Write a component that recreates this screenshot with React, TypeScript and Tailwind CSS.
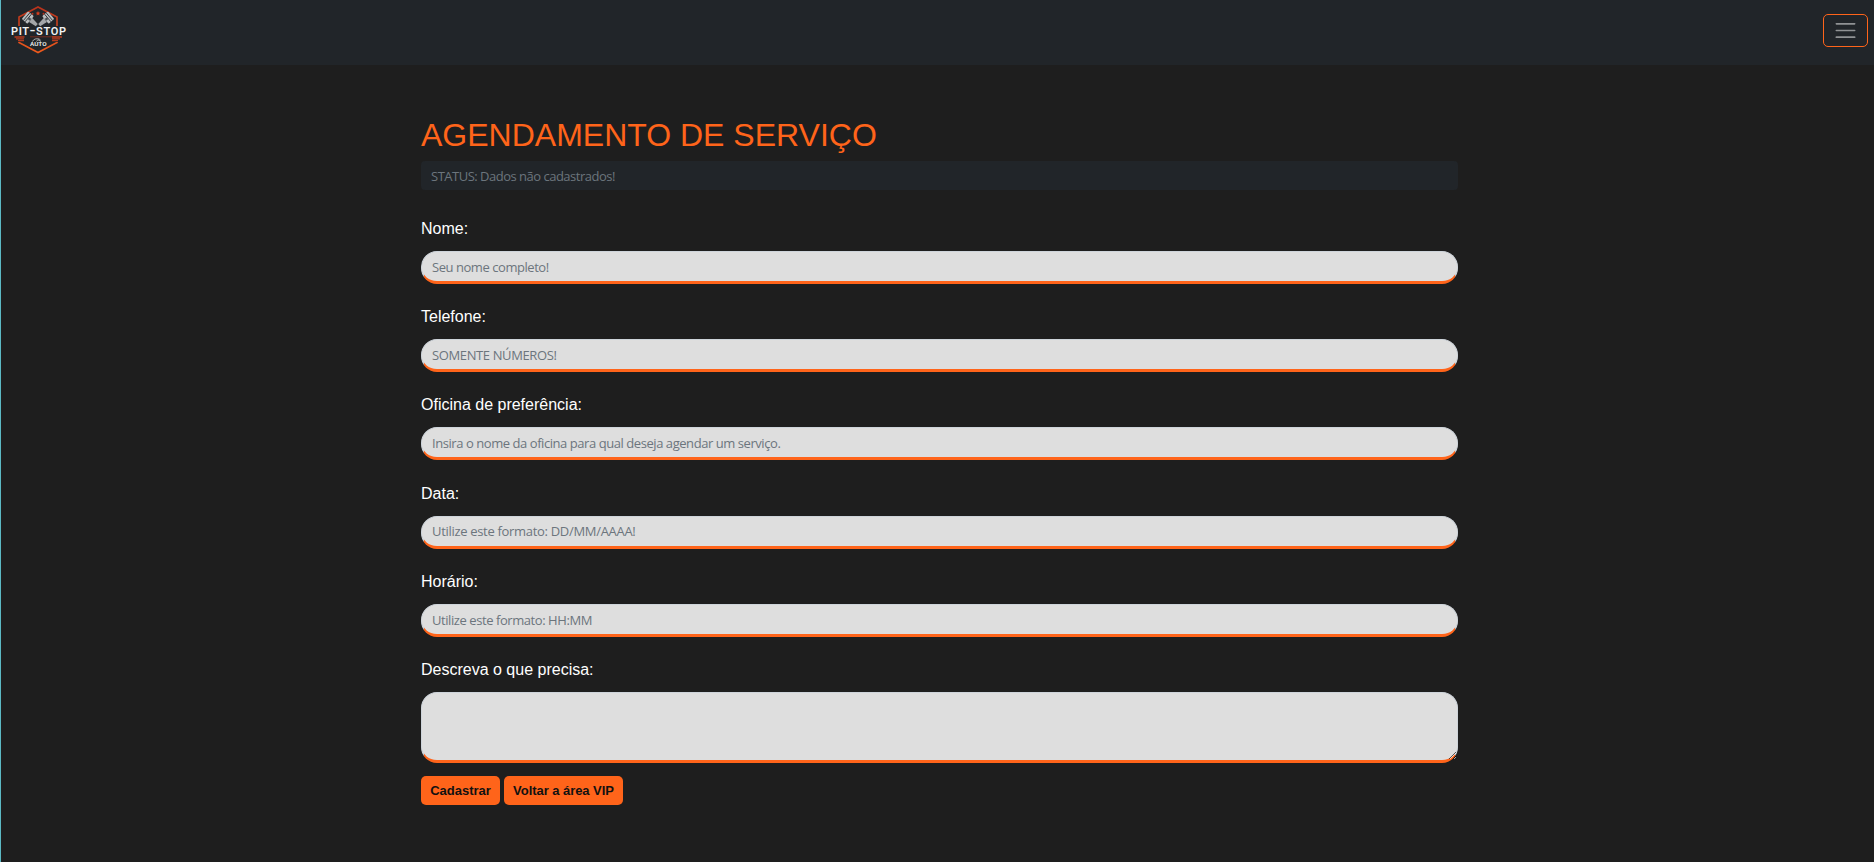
import React from "react";

const fields = [
  { label: "Nome:", placeholder: "Seu nome completo!", spacing: "tracking-[-0.45px]" },
  { label: "Telefone:", placeholder: "SOMENTE NÚMEROS!", spacing: "tracking-[-0.38px]" },
  {
    label: "Oficina de preferência:",
    placeholder: "Insira o nome da oficina para qual deseja agendar um serviço.",
    spacing: "tracking-[-0.44px]",
  },
  { label: "Data:", placeholder: "Utilize este formato: DD/MM/AAAA!", spacing: "tracking-[-0.31px]" },
  { label: "Horário:", placeholder: "Utilize este formato: HH:MM", spacing: "tracking-[-0.43px] pt-px" },
];

function Piston() {
  return (
    <g>
      <rect x="-5" y="-6" width="10" height="7.5" rx="1" fill="#b9bcbd" />
      <path d="M-5 -3.7h10M-5 -1.6h10" stroke="#33373b" strokeWidth="0.9" />
      <path d="M-2.5 1.5h5l-1 8h-3z" fill="#a4a7a9" />
      <circle cx="0" cy="0" r="1.4" fill="#4b5054" />
    </g>
  );
}

function Logo() {
  return (
    <svg width="60" height="52" viewBox="0 0 60 52" aria-label="Pit-Stop Auto">
      <defs>
        <linearGradient id="frame" x1="0" y1="0" x2="0" y2="1">
          <stop offset="0" stopColor="#b8321c" />
          <stop offset="1" stopColor="#ee5a1c" />
        </linearGradient>
      </defs>
      <path d="M10 20V11L29 1l19 10v9M10 36v.5L29 46.500l19-10v-.5" fill="none" stroke="url(#frame)" strokeWidth="1.6" />
      <path d="M29 5l.7 1.500 1.600.2-1.200 1.100.3 1.600L29 8.600l-1.400.8.3-1.600-1.200-1.100 1.600-.2z" fill="#d63c1c" />
      <circle cx="23.500" cy="7.800" r="1" fill="#b8321c" />
      <circle cx="34.500" cy="7.800" r="1" fill="#b8321c" />
      <g transform="translate(20.500 13) rotate(-50)"><Piston /></g>
      <g transform="translate(37.500 13) rotate(50)"><Piston /></g>
      <path d="M21 30.800h26" stroke="#8c2e1e" strokeWidth="0.8" />
      <path d="M5.500 31h10M7 32.800h8M9 34.600h6M43 31h10M43 32.800h8M43 34.600h6" stroke="#b63b1e" strokeWidth="1.3" />
      <g fill="#f1f2f2" fontFamily="Roboto, sans-serif" fontWeight="600">
        <text x="2" y="29" fontSize="11" textLength="18" lengthAdjust="spacing">PIT</text>
        <text x="20.500" y="28.500" fontSize="12" textLength="6" lengthAdjust="spacingAndGlyphs">-</text>
        <text x="27" y="29" fontSize="11" textLength="30" lengthAdjust="spacing">STOP</text>
        <text x="21" y="40.300" fontSize="6" textLength="16.500" lengthAdjust="spacingAndGlyphs">AUTO</text>
      </g>
      <path d="M23.500 35.500c1-2.500 3.500-3.200 7-2.500M27.500 35.500c.5-1.500 2-2 4-1.500M29.500 34l2.500 1.500" fill="none" stroke="#b4b7b8" strokeWidth="0.9" />
    </svg>
  );
}

const controlStyle =
  "block w-full border border-b-[3px] border-[#ced4da] border-b-[#ff641a] bg-[#dedede] rounded-2xl outline-none";

export default function App() {
  return (
    <div className="h-[862px] overflow-hidden border-l border-[#5cb9c4] bg-[#1e1e1e] font-['Liberation_Sans',Arial,sans-serif] text-white">
      <header className="flex h-[65px] items-center justify-between bg-[#212529] pr-1.5 pl-2">
        <a href="#" className="mt-[-2px] block">
          <Logo />
        </a>
        <button
          aria-label="Menu"
          className="mt-[-4px] flex h-[33px] w-[45px] items-center justify-center rounded-[5px] border border-[#ff641a]"
        >
          <svg width="25" height="25" viewBox="0 0 30 30" fill="none" stroke="#909294" strokeWidth="2" strokeLinecap="round">
            <path d="M4 7h22M4 15h22M4 23h22" />
          </svg>
        </button>
      </header>
      <main className="ml-[420px] w-[1037px] pt-[51px]">
        <h1 className="h-[45px] text-[32px] leading-[38px] whitespace-nowrap text-[#ff641a]">
          AGENDAMENTO DE SERVIÇO
        </h1>
        <div className="h-[29px] rounded bg-[#212529] px-2.5 font-['Open_Sans',sans-serif] text-[13px] leading-[31px] tracking-[-0.5px] text-[#6c757d]">
          STATUS: Dados não cadastrados!
        </div>
        <form className="pt-[26px]" onSubmit={(e) => e.preventDefault()}>
          {fields.map((f) => (
            <label key={f.label} className="block h-[88.2px]">
              <span className="block h-[35px] text-base leading-[25.4px]">{f.label}</span>
              <input
                placeholder={f.placeholder}
                className={`${controlStyle} ${f.spacing} h-[33px] px-2.5 font-['Open_Sans',sans-serif] text-[13px] placeholder:text-[#6c757d] placeholder:opacity-100`}
              />
            </label>
          ))}
          <label className="block h-[119px]">
            <span className="block h-[35px] text-base leading-[26px]">Descreva o que precisa:</span>
            <textarea className={`${controlStyle} h-[71px] resize-y px-2 py-1`} />
          </label>
          <div className="flex gap-1 font-bold text-[#111]">
            <button className="h-[29px] w-[79px] rounded-[5px] bg-[#ff641a] pt-px text-[13px]">Cadastrar</button>
            <button className="h-[29px] w-[119px] rounded-[5px] bg-[#ff641a] pt-px text-[13px] tracking-[-0.05px] whitespace-nowrap">Voltar a área VIP</button>
          </div>
        </form>
      </main>
    </div>
  );
}
